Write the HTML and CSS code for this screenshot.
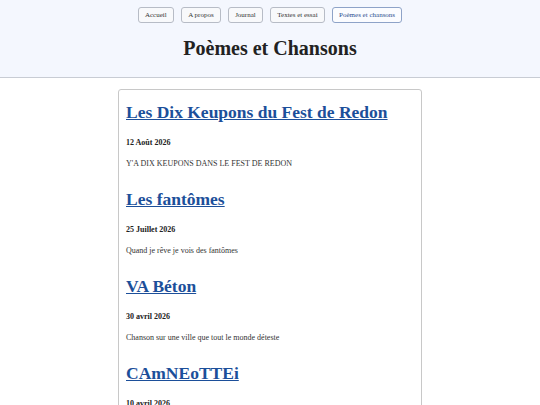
FILE: index.html
```html
<!DOCTYPE html>
<html lang="fr">
<head>
<meta charset="utf-8">
<title>Poèmes et Chansons</title>
<link rel="stylesheet" href="styles.css">
</head>
<body>
<header class="site-header">
  <nav class="nav">
    <a class="nav-btn" href="#">Accueil</a>
    <a class="nav-btn" href="#">A propos</a>
    <a class="nav-btn" href="#">Journal</a>
    <a class="nav-btn" href="#">Textes et essai</a>
    <a class="nav-btn active" href="#">Poèmes et chansons</a>
  </nav>
  <h1 class="page-title">Poèmes et Chansons</h1>
</header>
<main class="card">
  <article class="entry">
    <h2 class="entry-title"><a href="#">Les Dix Keupons du Fest de Redon</a></h2>
    <h4 class="entry-date">12 Août 2026</h4>
    <p class="entry-text">Y'A DIX KEUPONS DANS LE FEST DE REDON</p>
  </article>
  <article class="entry">
    <h2 class="entry-title"><a href="#">Les fantômes</a></h2>
    <h4 class="entry-date">25 Juillet 2026</h4>
    <p class="entry-text">Quand je rêve je vois des fantômes</p>
  </article>
  <article class="entry">
    <h2 class="entry-title"><a href="#">VA Béton</a></h2>
    <h4 class="entry-date">30 avril 2026</h4>
    <p class="entry-text">Chanson sur une ville que tout le monde déteste</p>
  </article>
  <article class="entry">
    <h2 class="entry-title"><a href="#">CAmNEoTTEi</a></h2>
    <h4 class="entry-date">10 avril 2026</h4>
    <p class="entry-text">Chanson</p>
  </article>
</main>
</body>
</html>
```
FILE: styles.css
```css
html, body {
  margin: 0;
  padding: 0;
  background: #ffffff;
  font-family: "Liberation Serif", "Times New Roman", serif;
  color: #222;
}
.site-header {
  background: #f4f7fe;
  border-bottom: 1px solid #c8ccd4;
  padding: 7px 0 0;
  height: 70px;
}
.nav {
  display: flex;
  justify-content: center;
  gap: 7.5px;
}
.nav-btn {
  display: inline-block;
  font-size: 7px;
  line-height: 14px;
  padding: 0 6px;
  border: 1px solid #b7bcc6;
  border-radius: 3px;
  background: #f8f9fb;
  color: #333;
  text-decoration: none;
}
.nav-btn.active {
  border-color: #8ea3c8;
  color: #2b4f8f;
  background: #fbfcff;
}
.page-title {
  margin: 12px 0 0;
  text-align: center;
  font-size: 20px;
  line-height: 26px;
  font-weight: bold;
  color: #222;
}
.card {
  width: 288px;
  margin: 11px auto 0;
  padding: 4px 7px;
  border: 1px solid #c8c8c8;
  border-radius: 3px;
}
.entry-title {
  margin: 6px 0 0;
  font-size: 17.5px;
  line-height: 24px;
}
.entry-title a {
  color: #1c4f9a;
  text-decoration: underline;
}
.entry-date {
  margin: 14px 0 0;
  font-size: 8px;
  line-height: 10px;
  font-weight: bold;
}
.entry-text {
  margin: 11px 0 0;
  font-size: 8px;
  line-height: 10px;
  color: #333;
}
.entry + .entry {
  margin-top: 18px;
}
```
